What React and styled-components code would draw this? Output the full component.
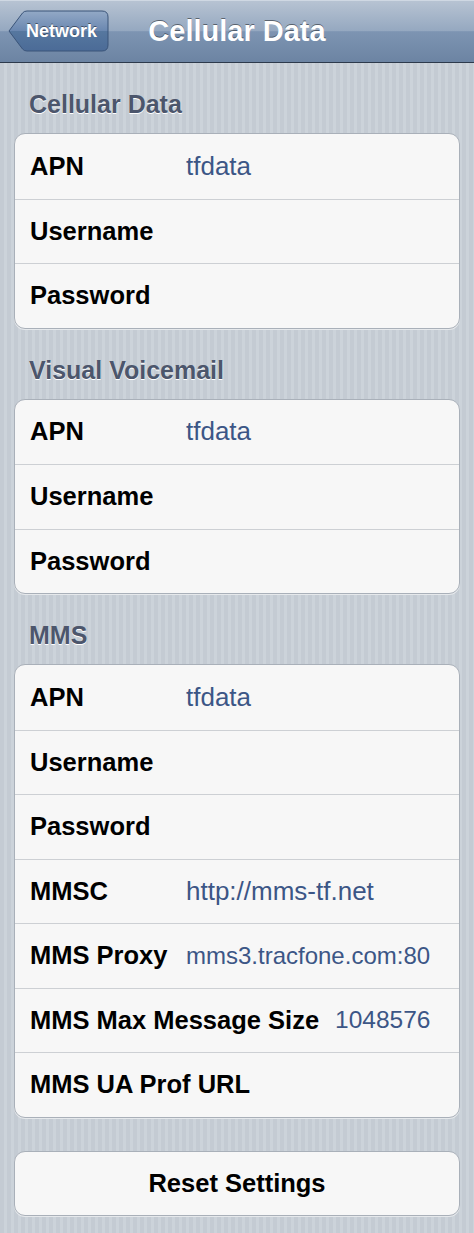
import React from 'react'
import styled, { createGlobalStyle } from 'styled-components'

const GlobalStyle = createGlobalStyle`
    html, body {
        margin: 0;
        padding: 0;
    }
    body {
        font-family: "Liberation Sans", Arial, sans-serif;
        background: #c7ced6;
    }
`

const Page = styled.div`
    width: 474px;
    min-height: 1233px;
    background-color: #c8cfd7;
    background-image: repeating-linear-gradient(
        90deg,
        #c4cbd3 0px,
        #c4cbd3 4px,
        #ccd3da 4px,
        #ccd3da 7px
    );
    padding-bottom: 17px;
    box-sizing: border-box;
`

const NavBar = styled.div`
    height: 62px;
    display: grid;
    grid-template-columns: 1fr auto 1fr;
    align-items: center;
    background: linear-gradient(
        to bottom,
        #b8c4d3 0%,
        #95a8c0 50%,
        #7d94b2 51%,
        #6c84a3 100%
    );
    border-bottom: 1px solid #2d3a4c;
    box-shadow: inset 0 1px 0 #cfd8e3;
`

const BackButton = styled.div`
    position: relative;
    justify-self: start;
    margin-left: 8px;
    width: 101px;
    height: 42px;
    display: flex;
    align-items: center;
    padding-left: 18px;
    box-sizing: border-box;
`

const BackShape = styled.svg`
    position: absolute;
    left: 0;
    top: 0;
`

const BackLabel = styled.span`
    position: relative;
    color: #fff;
    font-size: 18px;
    font-weight: bold;
    text-shadow: 0 -1px 0 rgba(0, 0, 0, 0.45);
`

const Title = styled.h1`
    margin: 0;
    color: #fff;
    font-size: 29px;
    font-weight: bold;
    text-shadow: 0 -1px 0 rgba(0, 0, 0, 0.45);
    white-space: nowrap;
`

const SectionHeader = styled.div`
    padding: 29px 29px 16px;
    line-height: 25px;
    font-size: 25px;
    font-weight: bold;
    color: #4c566c;
    text-shadow: 0 1px 0 #fff;
`

const Group = styled.div`
    margin: 0 14px;
    background: #f7f7f7;
    border: 1px solid #a9b0b9;
    border-radius: 11px;
    overflow: hidden;
    box-shadow: 0 1px 0 #e6e9ec;
`

const Row = styled.div`
    height: 64.5px;
    box-sizing: border-box;
    display: flex;
    align-items: center;
    padding: 0 15px;
    gap: 16px;
    & + & {
        border-top: 1px solid #cdd0d4;
    }
`

const Label = styled.span`
    min-width: 140px;
    font-size: 25.5px;
    font-weight: bold;
    color: #000;
    white-space: nowrap;
`

const Value = styled.span`
    font-size: ${(p) => p.$size || 26}px;
    color: #3c5686;
    white-space: nowrap;
`

const ResetButton = styled.div`
    margin: 33px 14px 0;
    height: 65px;
    box-sizing: border-box;
    background: #f7f7f7;
    border: 1px solid #a9b0b9;
    border-radius: 11px;
    display: flex;
    align-items: center;
    justify-content: center;
    font-size: 25.5px;
    font-weight: bold;
    color: #000;
    box-shadow: 0 1px 0 #e6e9ec;
`

// values that iOS shrank to fit carry their own size
const sections = [
    {
        title: 'Cellular Data',
        rows: [
            ['APN', 'tfdata'],
            ['Username', ''],
            ['Password', ''],
        ],
    },
    {
        title: 'Visual Voicemail',
        rows: [
            ['APN', 'tfdata'],
            ['Username', ''],
            ['Password', ''],
        ],
    },
    {
        title: 'MMS',
        rows: [
            ['APN', 'tfdata'],
            ['Username', ''],
            ['Password', ''],
            ['MMSC', 'http://mms-tf.net'],
            ['MMS Proxy', 'mms3.tracfone.com:80', 24],
            ['MMS Max Message Size', '1048576', 24.5],
            ['MMS UA Prof URL', ''],
        ],
    },
]

const Back = () => (
    <BackButton>
        <BackShape width="101" height="42" viewBox="0 0 101 42">
            <defs>
                <linearGradient id="backFill" x1="0" y1="0" x2="0" y2="1">
                    <stop offset="0" stopColor="#93a9c6" />
                    <stop offset="0.5" stopColor="#6a87b0" />
                    <stop offset="0.51" stopColor="#56779f" />
                    <stop offset="1" stopColor="#4b6b97" />
                </linearGradient>
            </defs>
            <path
                d="M1 21 L14.5 3 Q16 1 19 1 H94 Q100 1 100 7 V35 Q100 41 94 41 H19 Q16 41 14.5 39 Z"
                fill="url(#backFill)"
                stroke="#3a5479"
                strokeWidth="1"
            />
        </BackShape>
        <BackLabel>Network</BackLabel>
    </BackButton>
)

const App = () => {
    return (
        <Page>
            <GlobalStyle />
            <NavBar>
                <Back />
                <Title>Cellular Data</Title>
                <div />
            </NavBar>
            {sections.map((section) => (
                <div key={section.title}>
                    <SectionHeader>{section.title}</SectionHeader>
                    <Group>
                        {section.rows.map(([label, value, size]) => (
                            <Row key={label}>
                                <Label>{label}</Label>
                                {value && <Value $size={size}>{value}</Value>}
                            </Row>
                        ))}
                    </Group>
                </div>
            ))}
            <ResetButton>Reset Settings</ResetButton>
        </Page>
    )
}

export default App
